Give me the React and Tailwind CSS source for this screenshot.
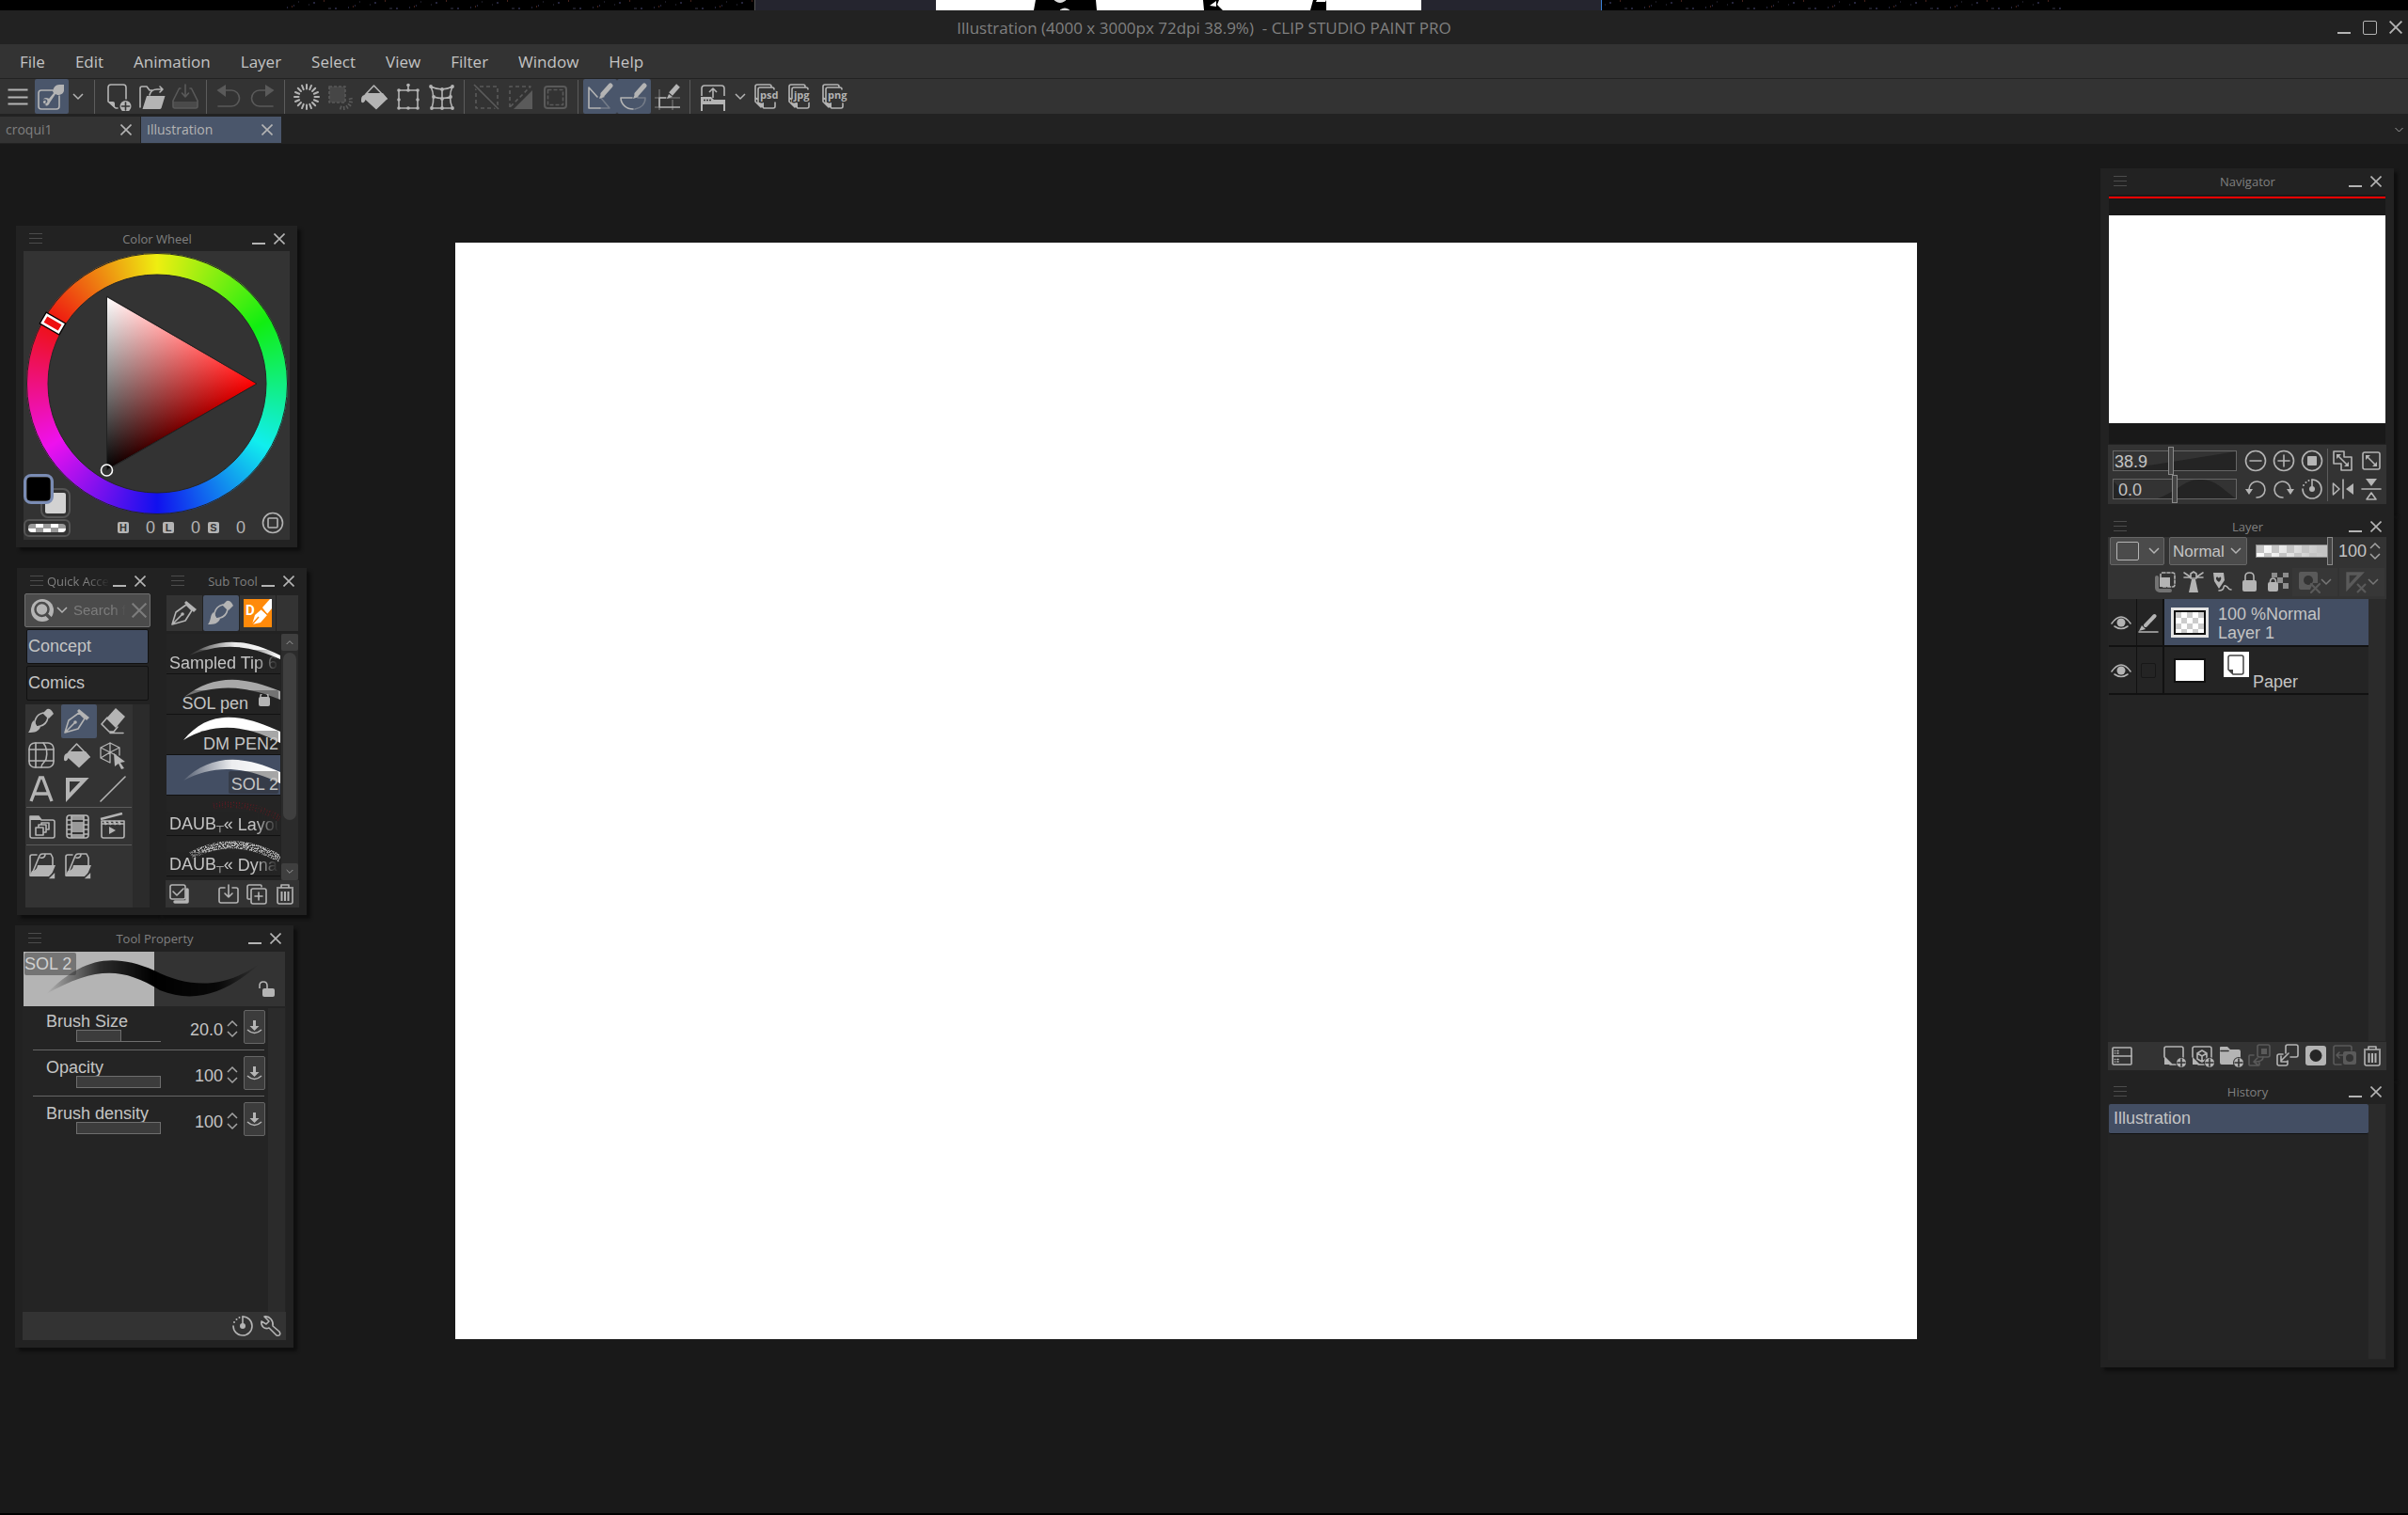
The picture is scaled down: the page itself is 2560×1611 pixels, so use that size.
import { useState } from "react";
import clsx from "clsx";

const MENUS = ["File", "Edit", "Animation", "Layer", "Select", "View", "Filter", "Window", "Help"];

/* ---------- icon helpers ---------- */

function Svg({ size = 30, className, children, ...rest }) {
  return (
    <svg
      width={size}
      height={size}
      viewBox={`0 0 ${size} ${size}`}
      fill="none"
      stroke="currentColor"
      strokeWidth="1.6"
      strokeLinecap="round"
      strokeLinejoin="round"
      className={clsx("shrink-0", className)}
      aria-hidden="true"
      {...rest}
    >
      {children}
    </svg>
  );
}

const solid = { fill: "currentColor", stroke: "none" };

function PlusBadge({ x, y, r = 6 }) {
  return (
    <g>
      <circle cx={x} cy={y} r={r + 1} fill="#333" stroke="none" />
      <circle cx={x} cy={y} r={r} {...solid} />
      <path d={`M${x - 4} ${y}h8M${x} ${y - 4}v8`} stroke="#333" />
    </g>
  );
}

const Chevron = ({ className }) => (
  <svg width="12" height="8" viewBox="0 0 12 8" fill="none" stroke="currentColor" strokeWidth="1.5" className={clsx("shrink-0", className)} aria-hidden="true">
    <path d="M1 1l5 5 5-5" />
  </svg>
);

const CloseGlyph = ({ size = 12 }) => (
  <svg width={size} height={size} viewBox="0 0 12 12" stroke="currentColor" strokeWidth="1.6" aria-hidden="true">
    <path d="M.5.5l11 11M11.5.5l-11 11" />
  </svg>
);

const Bars = () => (
  <svg width="14" height="12" viewBox="0 0 14 12" stroke="currentColor" strokeWidth="1" aria-hidden="true">
    <path d="M0 .5h14M0 5.500h14M0 10.500h14" />
  </svg>
);

/* ---------- command bar icons ---------- */

const MenuIcon = () => (
  <Svg strokeWidth="2.2" strokeLinecap="butt"><path d="M4.500 7.500h21M4.500 15.500h21M4.500 22.500h21" /></Svg>
);

const TouchIcon = () => (
  <Svg>
    <path d="M16 8H4a3 3 0 0 0-3 3v14a3 3 0 0 0 3 3h16a3 3 0 0 0 3-3V14" />
    <path d="M28 2v6c0 3-3 5-7 5l-2-1-6 9c-1 3-3 4-5 3s-3-2-3-4 2-4 4-4 3 1 3 1l5-6-1-2c1-4 3-7 7-7z" {...solid} />
    <path d="M8 23c-2 0-3-1-3-2.500s1-2.500 3-2.500 2 2 1 3" stroke="#4a566b" />
  </Svg>
);

const NewIcon = () => (
  <Svg>
    <path d="M14 27h-2l-8-7V5a3 3 0 0 1 3-3h13a3 3 0 0 1 3 3v12" />
    <path d="M4 20h5a2 2 0 0 1 2 2v5z" {...solid} />
    <PlusBadge x={22.5} y={25} />
  </Svg>
);

const OpenIcon = () => (
  <Svg>
    <path d="M2 26V6a2 2 0 0 1 2-2h5l3 4h3M12 13c1-4 4-6 8-6h5M23 4l3 3-3 3" />
    <path d="M9 14h19.500l-4 13a2 2 0 0 1-2 1H4.500z" {...solid} />
  </Svg>
);

const SaveIcon = () => (
  <Svg>
    <path d="M10 6H8.500L2 19v6a2 2 0 0 0 2 2h22a2 2 0 0 0 2-2v-6L21.500 6H20M15 2v12M11.500 11l3.500 4 3.500-4" />
    <path d="M2 20h26v5a2 2 0 0 1-2 2H4a2 2 0 0 1-2-2z" {...solid} fillOpacity=".6" />
  </Svg>
);

const UndoIcon = ({ flip }) => (
  <Svg className={flip && "-scale-x-100"}>
    <path d="M8 8h10a8.500 8.500 0 0 1 0 17H4" />
    <path d="M2.500 8L12 2v13z" {...solid} />
  </Svg>
);

const RAYS = Array.from({ length: 16 }, (_, i) => i * 22.5);

const RaysIcon = () => (
  <Svg strokeWidth="2">
    {RAYS.map((a) => <path key={a} d="M15 2v4.500" transform={`rotate(${a} 15 15)`} />)}
  </Svg>
);

const DeselectIcon = () => (
  <Svg strokeLinecap="butt">
    <rect x="3" y="4" width="17" height="17" fill="currentColor" fillOpacity=".5" strokeDasharray="3 2" />
    {[75, 100, 125, 150, 175, 200].map((a) => (
      <path key={a} d="M18 9v4" transform={`rotate(${a} 18 19)`} />
    ))}
  </Svg>
);

const BucketIcon = () => (
  <Svg>
    <path d="M6 12l8.500-9L28 17" />
    <path d="M4 13l3-2h17l5 6-12 11.500L5.500 18c-.500 3-4.500 5-4.500 1s1-5 3-6z" {...solid} />
  </Svg>
);

const TransformIcon = () => (
  <Svg>
    <path d="M5 8h20v19H5zM15 8V2" />
    {[[5, 8], [15, 8], [25, 8], [5, 18], [25, 18], [5, 27], [15, 27], [25, 27], [15, 2.5]].map(([x, y]) => (
      <circle key={`${x}-${y}`} cx={x} cy={y} r="1.800" {...solid} />
    ))}
  </Svg>
);

const MeshIcon = () => (
  <Svg>
    <path d="M3 4q12 6 23 0M6 15q9 3 18 0M4 27h22M3 4q5 11 1 23M15 7v20M26 4q-5 11 0 23" />
    {[[3, 4], [26, 4], [15, 7], [6, 15], [15, 17], [24, 15], [4, 27], [15, 27], [26, 27]].map(([x, y]) => (
      <circle key={`${x}-${y}`} cx={x} cy={y} r="1.900" {...solid} />
    ))}
  </Svg>
);

const ClearIcon = () => (
  <Svg strokeLinecap="butt">
    <path d="M4 4v23h23V4z" strokeDasharray="4 3" />
    <path d="M1 1l27 27" stroke="#333" strokeWidth="4" />
    <path d="M2 2l26 26" />
  </Svg>
);

const InvertIcon = () => (
  <Svg strokeLinecap="butt">
    <path d="M4 26V4h22L4 26" strokeDasharray="4 3" />
    <path d="M28 8v20H8z" {...solid} />
  </Svg>
);

const SelectedAreaIcon = () => (
  <Svg strokeLinecap="butt">
    <rect x="4" y="4" width="23" height="23" rx="3" strokeWidth="2" />
    <rect x="7.500" y="7.500" width="16" height="16" strokeDasharray="4 2" />
  </Svg>
);

const PenTip = () => (
  <>
    <path d="M26 3l-8 9" strokeWidth="5" />
    <path d="M14 17l2-5 4 3z" {...solid} />
  </>
);

const SnapRulerIcon = () => (
  <Svg>
    <path d="M15 27H3V5l9 10" />
    <path d="M15 15l10 12H15" strokeOpacity=".4" />
    <PenTip />
  </Svg>
);

const SnapSpecialIcon = () => (
  <Svg>
    <path d="M13 16H1c0 7 6 12 13 12" />
    <path d="M16 28c6-1 11-5 11-12h-8" strokeOpacity=".4" />
    <PenTip />
  </Svg>
);

const SnapGridIcon = () => (
  <Svg strokeLinecap="butt">
    <path d="M6 7v22M1 26h5M20 18v11M1 16h27" strokeOpacity=".4" />
    <path d="M13 16H6v10h22" />
    <PenTip />
  </Svg>
);

const MaterialIcon = () => (
  <Svg strokeLinecap="butt">
    <path d="M3 14V6q0-3 3-3h18q3 0 3 3v8" />
    <path d="M15 16V6M11 10l4-4 4 4" />
    <path d="M2 15h11l3 3h12v12h-2v-7H4v7H2z" {...solid} />
    <path d="M5 18.500h9" stroke="#333" strokeDasharray="2 1" />
  </Svg>
);

function ExportIcon({ label }) {
  return (
    <Svg size={34}>
      <path d="M8 20l-3-2V6a2 2 0 0 1 2-2h13a2 2 0 0 1 2 2M11 28l-6-6V9M25 9a2 2 0 0 0-2-2H10a2 2 0 0 0-2 2v14l6 6h10a2 2 0 0 0 2-2v-4" />
      <path d="M8 23h6v6z" {...solid} />
      <text x="10" y="19" fill="currentColor" stroke="#333" strokeWidth="3" paintOrder="stroke" fontSize="11" fontWeight="700" fontFamily="'Open Sans', sans-serif">{label}</text>
    </Svg>
  );
}

/* ---------- tool icons ---------- */

const BrushIcon = () => (
  <Svg>
    <path d="M8 15c1-4 4-8 9-9l5 5c-1 5-4 8-8 9l-4 1-2-3z" />
    <path d="M17 6l4-4q4-1 7 5l-5 5z" {...solid} />
    <path d="M7 14c-4 3-2 8-6 13 7 0 11-1 13-6l-4-1z" {...solid} />
  </Svg>
);

const PenIcon = () => (
  <Svg>
    <path d="M2 27l4-13 11-8 6 6-7 11zM2 27l10-10" />
    <circle cx="13" cy="16" r="1.800" {...solid} />
    <path d="M17 2l11 9-3 3L15 4z" {...solid} />
  </Svg>
);

const EraserIcon = () => (
  <Svg>
    <path d="M9 11l-6 7 8 8h5l4-5M12 27.500h14" />
    <path d="M18 1l10 9-10 12L8 12z" {...solid} />
  </Svg>
);

const FrameIcon = () => (
  <Svg>
    <rect x="2" y="2" width="26" height="26" rx="6" />
    <path d="M2 9h26M9 2v26M2 21h26M17 2c5 6 4 13 3 17s-5 4-5 9" />
  </Svg>
);

const CubeIcon = () => (
  <Svg>
    <path d="M12 2l10 5v8M12 2L2 7v11l10 5M2 7l10 5 10-5M12 2v21M2 18l10-6 6 3" strokeWidth="1.300" />
    <path d="M16 13l12 9-5 1 4 6-3 1-3-6-4 3z" {...solid} />
  </Svg>
);

const TextIcon = () => (
  <Svg strokeWidth="3.400" strokeLinecap="butt" strokeLinejoin="miter">
    <path d="M4 28l9.500-25h3L26 28M8 20h14" />
  </Svg>
);

const RulerIcon = () => (
  <Svg strokeWidth="4" strokeLinejoin="miter"><path d="M5 5h18L5 24z" /></Svg>
);

const LineIcon = () => <Svg><path d="M2 28L28 2" /></Svg>;

const MaterialsFolderIcon = () => (
  <Svg>
    <path d="M2 25V4h9l3 4h12a2 2 0 0 1 2 2v15a2 2 0 0 1-2 2H4a2 2 0 0 1-2-2z" />
    <path d="M2 4h9l3 4H2z" {...solid} />
    <path d="M8 16h8v8H8zM11 16v-3h8v8h-3M14 13v-2h8v7h-3" />
  </Svg>
);

const FilmIcon = () => (
  <Svg strokeLinecap="butt">
    <rect x="4" y="3" width="23" height="24" rx="3" />
    <path d="M9 3v24M22 3v24" />
    <path d="M9 3h13v5H9zM9 10h13v11H9zM9 23h13v4H9z" {...solid} fillOpacity=".8" />
    <path d="M4 8h5M4 13h5M4 18h5M4 23h5M22 8h5M22 13h5M22 18h5M22 23h5" />
  </Svg>
);

const ClapperIcon = () => (
  <Svg strokeLinecap="butt">
    <path d="M4 12v13a2 2 0 0 0 2 2h20a2 2 0 0 0 2-2V9H4zM4 12h24" />
    <path d="M3 7l23-6M7 9l2 4M12 9l2 4M17 9l2 4M22 9l2 4" strokeWidth="2.500" />
    <path d="M12 15v8l7-4z" {...solid} />
  </Svg>
);

const FileFolderIcon = () => (
  <Svg>
    <path d="M3 25V5a2 2 0 0 1 2-2h5M6 21L13 4q1-2 3-2h9l2 4v8M14 6q4 1 5-3" />
    <path d="M11 14h19l-5 12H4q-2 0-1-2l2-4q5 0 6-6z" {...solid} />
    <path d="M30 20v9h-9z" fill="currentColor" stroke="#333" />
  </Svg>
);

const GRID_TOOLS = [
  [BrushIcon, "Brush"], [PenIcon, "Pen"], [EraserIcon, "Eraser"],
  [FrameIcon, "Frame"], [BucketIcon, "Fill"], [CubeIcon, "Object"],
  [TextIcon, "Text"], [RulerIcon, "Ruler"], [LineIcon, "Line"],
];

/* ---------- small palette icons ---------- */

const TrashIcon = () => (
  <Svg size={24} strokeLinecap="butt">
    <path d="M4 6v14a2 2 0 0 0 2 2h12a2 2 0 0 0 2-2V6M3 5h18M8 5V2h8v3" />
    <path d="M8.500 9v10M12 9v10M15.500 9v10" strokeWidth="2" />
  </Svg>
);

const CheckCopyIcon = () => (
  <Svg size={24}>
    <rect x="3" y="2" width="16" height="15" rx="2" />
    <path d="M6 9l4 4 7-7" />
    <path d="M21 7v13H8" strokeWidth="3.500" />
  </Svg>
);

const ImportIcon = () => (
  <Svg size={24}><path d="M8 5H4a2 2 0 0 0-2 2v12a2 2 0 0 0 2 2h16a2 2 0 0 0 2-2V7a2 2 0 0 0-2-2h-4M12 2v13M8 11l4 4 4-4" /></Svg>
);

const DuplicateIcon = () => (
  <Svg size={24}>
    <path d="M5 17H3a1 1 0 0 1-1-1V4a2 2 0 0 1 2-2h12a1 1 0 0 1 1 1v1" />
    <rect x="6" y="6" width="16" height="16" rx="2" />
    <path d="M14 10v8M10 14h8" />
  </Svg>
);

const DialIcon = () => (
  <Svg size={24}>
    <path d="M12 2a10 10 0 1 1-10 10" />
    <path d="M12 2v10" />
    <circle cx="12" cy="12" r="3" {...solid} />
    <path d="M3 8v.1M5.500 5v.1M8.500 3v.1" strokeWidth="2" />
  </Svg>
);

const WrenchIcon = () => (
  <Svg size={24}>
    <path d="M5 2l5 5-3 3-5-3c-1 5 3 9 8 7l8 8c3 1 5-1 3-4l-7-6c1-5-3-11-9-10z" />
  </Svg>
);

const CircleIcon = ({ children }) => (
  <Svg size={24}><circle cx="12" cy="12" r="10.500" />{children}</Svg>
);

const RotateIcon = ({ flip }) => (
  <Svg size={24} className={flip && "-scale-x-100"}>
    <path d="M5 12a8.500 8.500 0 1 1 8 9" />
    <path d="M1 12h8l-4 6z" {...solid} />
  </Svg>
);

const FitIcon = () => (
  <Svg size={24}>
    <rect x="3" y="3" width="18" height="18" rx="2" />
    <path d="M8 8l8 8" />
    <path d="M6 6h5l-5 5zM18 18v-5l-5 5z" {...solid} />
  </Svg>
);

const FitAllIcon = () => (
  <Svg size={24}>
    <path d="M2 2h11v6h8v14H10v-7H2zM7 7l9 9" />
    <path d="M5 5h5l-5 5zM18 18v-5l-5 5z" {...solid} />
  </Svg>
);

const MirrorIcon = ({ vertical }) => (
  <Svg size={24} className={vertical && "rotate-90"}>
    <path d="M12 2v20" />
    <path d={vertical ? "M9 12L1 6v12z" : "M1.500 6v12l6.500-6z"} {...(vertical ? solid : {})} />
    <path d={vertical ? "M16 12l7-5v10z" : "M15 12l8-6v12z"} {...(vertical ? {} : solid)} />
  </Svg>
);

const ClipMaskIcon = () => (
  <Svg size={24}>
    <path d="M3 7v11a3 3 0 0 0 3 3h11" strokeWidth="4" strokeOpacity=".5" />
    <rect x="7" y="2" width="15" height="15" rx="2" strokeDasharray="3 2" />
    <rect x="6" y="7" width="11" height="10" {...solid} />
  </Svg>
);

const LighthouseIcon = () => (
  <Svg size={24}>
    <path d="M9 3l3-2 3 2v5H9zM8 6L2 2M8 7H2M16 6l6-4M16 7h6" />
    <path d="M10 9h4l3 14H7z" {...solid} />
  </Svg>
);

const DraftIcon = () => (
  <Svg size={24}>
    <path d="M3 2h11l1 8-6 9-5-8z" {...solid} />
    <path d="M9 8c-3-4-5 1 0 4 4-3 2-8 0-4z" fill="#333" stroke="none" />
    <path d="M9 21c8 0 3-6 7-5s2 4 6 4" />
  </Svg>
);

const LockIcon = () => (
  <Svg size={24}>
    <rect x="4" y="10" width="15" height="12" rx="2" {...solid} />
    <path d="M7 10V6q0-4 4.500-4T16 6v4" />
  </Svg>
);

const LockAlphaIcon = () => (
  <Svg size={24}>
    <path d="M5 2h6v5H5zM17 2h6v5h-6zM11 7h6v6h-6zM17 13h6v6h-6z" {...solid} fillOpacity=".7" />
    <rect x="1" y="12" width="11" height="10" rx="2" {...solid} />
    <path d="M3.500 12q0-4 3-4t3 4" />
  </Svg>
);

const MaskToggleIcon = () => (
  <Svg size={24}>
    <path d="M3 1h16a2 2 0 0 1 2 2v10h-5l-3 7H3a2 2 0 0 1-2-2V3a2 2 0 0 1 2-2z" {...solid} />
    <circle cx="11" cy="10" r="5" fill="#333" stroke="none" />
    <path d="M14 14l9 9M23 14l-9 9" strokeWidth="2.200" />
  </Svg>
);

const RulerToggleIcon = () => (
  <Svg size={24} strokeLinecap="butt">
    <path d="M3 3h14L3 18z" strokeWidth="3.400" strokeLinejoin="miter" />
    <path d="M13 14l9 9M22 14l-9 9" strokeWidth="2.200" />
  </Svg>
);

const EyeIcon = () => (
  <Svg size={24}>
    <path d="M2 13q10-14 20 0M5 16q7 5 14 0" />
    <circle cx="12" cy="12" r="4.500" {...solid} />
  </Svg>
);

const EditPenIcon = () => (
  <Svg size={24}>
    <path d="M2 22h20" />
    <path d="M18.500 5L9 15" strokeWidth="4" />
    <path d="M2 21l3-6 4 4z" {...solid} />
  </Svg>
);

const TwoPaneIcon = () => (
  <Svg size={24}>
    <rect x="2" y="3" width="20" height="18" rx="1" />
    <path d="M2 12h20M7 6.500h1M7 9h1M7 15.500h1M7 18h1M4.500 6.500h.1M4.500 9h.1M4.500 15.500h.1M4.500 18h.1" />
  </Svg>
);

const NewLayerIcon = () => (
  <Svg size={26}>
    <path d="M2 14V5a2 2 0 0 1 2-2h16a2 2 0 0 1 2 2v10M8 22h7M2 14l8 8" />
    <path d="M2 14l8 8H2z" {...solid} />
    <PlusBadge x={20} y={20} r={5} />
  </Svg>
);

const New3dIcon = () => (
  <Svg size={26}>
    <path d="M2 14V5a2 2 0 0 1 2-2h16a2 2 0 0 1 2 2v10M8 22h7M12 7l5 3v6l-5 3-5-3v-6zM7 10l5 3 5-3M12 13v6" />
    <path d="M2 14l8 8H2z" {...solid} />
    <PlusBadge x={20} y={20} r={5} />
  </Svg>
);

const NewFolderIcon = () => (
  <Svg size={26}>
    <path d="M1 4a1 1 0 0 1 1-1h7l3 3h9a2 2 0 0 1 2 2v14H3a2 2 0 0 1-2-2z" {...solid} />
    <path d="M2 7.500h8" stroke="#333" />
    <PlusBadge x={21} y={20} r={5} />
  </Svg>
);

const TransferIcon = () => (
  <Svg size={26}>
    <rect x="11" y="1" width="13" height="13" rx="2" />
    <rect x="15" y="5" width="6" height="6" {...solid} />
    <path d="M7 12H3a1 1 0 0 0-1 1v9a1 1 0 0 0 1 1h9a1 1 0 0 0 1-1v-2M17 14c0 4-4 5-9 5M11 15l-4 4 4 3" />
  </Svg>
);

const MergeIcon = () => (
  <Svg size={26}>
    <path d="M11 10V3a2 2 0 0 1 2-2h9a2 2 0 0 1 2 2v9a2 2 0 0 1-2 2h-6M8 11H4a2 2 0 0 0-2 2v8a2 2 0 0 0 2 2h7a2 2 0 0 0 2-2v-3M14 10l-8 8M6 13v6h6" />
  </Svg>
);

const MaskIcon = () => (
  <Svg size={26}>
    <rect x="2" y="2" width="22" height="21" rx="3" {...solid} />
    <circle cx="13" cy="12.500" r="6.500" fill="#262626" stroke="none" />
  </Svg>
);

const ApplyMaskIcon = () => (
  <Svg size={26}>
    <path d="M21 7V4a2 2 0 0 0-2-2H4a2 2 0 0 0-2 2v16a2 2 0 0 0 2 2h6M12 12H5M8 9l-3 3 3 3" />
    <rect x="12" y="8" width="14" height="14" rx="2" {...solid} />
    <circle cx="19" cy="15" r="4" fill="#333" stroke="none" />
  </Svg>
);

/* ---------- shared pieces ---------- */

function PanelHeader({ title, clipped }) {
  return (
    <header
      className={clsx(
        "h-[27px] shrink-0 items-center pt-px pr-[13px] pl-[14px] text-[13px] leading-4 text-[#808080]",
        clipped ? "flex" : "grid grid-cols-[1fr_auto_1fr]"
      )}
    >
      <button aria-label={`${title} menu`} className="w-[14px] shrink-0 text-[#4c4c4c]"><Bars /></button>
      {clipped ? (
        <h2 className="ml-1 w-[70px] overflow-hidden whitespace-nowrap [mask-image:linear-gradient(to_right,#000_60%,transparent_95%)]">{title}</h2>
      ) : (
        <h2 className="whitespace-nowrap">{title}</h2>
      )}
      <div className="flex shrink-0 items-center justify-end gap-[9px] text-[#b4b4b4]">
        <button aria-label={`Minimize ${title}`} className="h-3 w-[14px] border-b-2 border-current" />
        <button aria-label={`Close ${title}`}><CloseGlyph /></button>
      </div>
    </header>
  );
}

function Panel({ title, clipped, className, children }) {
  return (
    <section className={clsx("flex flex-col bg-[#222] shadow-[4px_4px_3px_#0e0e0e]", className)} aria-label={title}>
      <PanelHeader title={title} clipped={clipped} />
      {children}
    </section>
  );
}

function ToolButton({ label, active, dim, className, children }) {
  return (
    <button
      aria-label={label}
      className={clsx(
        "flex shrink-0 items-center justify-center",
        active && "rounded-xs bg-[#4a566b]",
        dim ? "text-[#5a5a5a]" : "text-[#b4b4b4]",
        className
      )}
    >
      {children}
    </button>
  );
}

const Divider = () => <span className="mx-[5px] h-9 w-px shrink-0 bg-[#5c5c5c]" />;

function Spinner({ label }) {
  return (
    <div className="flex flex-col gap-1 text-[#a4a4a4]">
      <button aria-label={`Increase ${label}`}><Chevron className="rotate-180" /></button>
      <button aria-label={`Decrease ${label}`}><Chevron /></button>
    </div>
  );
}

/* ---------- window frame ---------- */

function DesktopStrip() {
  return (
    <div className="flex h-[11px] w-full overflow-hidden bg-black" aria-hidden="true">
      <svg className="h-[11px] flex-[802]">
        <defs>
          <pattern id="stars" width="65" height="11" patternUnits="userSpaceOnUse">
            <path d="M8 3h2M31 9h2M45 8h1M52 6h1" stroke="#4a4a78" />
            <path d="M24 9h3M57 2h1M3 5h1" stroke="#35354a" />
            <path d="M50 7h1M19 1h1" stroke="#8a4436" />
          </pattern>
        </defs>
        <rect x="295" width="507" height="11" fill="url(#stars)" />
      </svg>
      <svg width="901" height="11" className="shrink-0 bg-[#25252f]">
        <rect x="193" width="516" height="11" fill="#fff" />
        <path d="M299 0h64l1 11h-67zM477 0h17l-2 5 6 6h-20zM594 0h14v11h-17z" fill="#000" />
        <path d="M319 0q6 5 12 0M325 11q5-4 10 0" fill="#ddd" stroke="#ddd" />
        <path d="M484 6l7-5v6zM597 2h10l1-2h-10z" fill="#fff" />
        <path d="M.5 0v11" stroke="#555" />
        <path d="M900.500 0v11" stroke="#3b82d6" />
      </svg>
      <svg className="h-[11px] flex-[857]"><rect width="500" height="11" fill="url(#stars)" /></svg>
    </div>
  );
}

function TitleBar() {
  return (
    <div className="grid h-9 grid-cols-[1fr_auto_1fr] items-center bg-[#222] px-1.5 text-[17px] text-[#808080]">
      <h1 className="col-start-2 pt-px whitespace-pre">Illustration (4000 x 3000px 72dpi 38.9%)  - CLIP STUDIO PAINT PRO</h1>
      <div className="flex items-center justify-end gap-[13px] text-[#b4b4b4]">
        <button aria-label="Minimize" className="h-[14px] w-[14px] border-b-2 border-current" />
        <button aria-label="Maximize" className="h-[15px] w-[15px] rounded-xs border border-current" />
        <button aria-label="Close"><CloseGlyph size={14} /></button>
      </div>
    </div>
  );
}

function CommandBar() {
  return (
    <div className="flex h-[37px] items-center bg-[#333]" role="toolbar">
      <ToolButton label="Main menu" className="h-full w-[37px]"><MenuIcon /></ToolButton>
      <ToolButton label="Touch gesture" active className="h-full w-9"><TouchIcon /></ToolButton>
      <ToolButton label="Touch options" className="h-full w-5"><Chevron /></ToolButton>
      <span className="mx-[7px] h-9 w-px bg-[#5c5c5c]" />
      <ToolButton label="New" className="h-full w-9"><NewIcon /></ToolButton>
      <ToolButton label="Open" className="h-full w-[35px]"><OpenIcon /></ToolButton>
      <ToolButton label="Save" dim className="h-full w-[35px]"><SaveIcon /></ToolButton>
      <Divider />
      <ToolButton label="Undo" dim className="h-full w-9"><UndoIcon /></ToolButton>
      <ToolButton label="Redo" dim className="h-full w-9"><UndoIcon flip /></ToolButton>
      <Divider />
      <ToolButton label="Clear" className="h-full w-9"><RaysIcon /></ToolButton>
      <ToolButton label="Clear outside selection" dim className="h-full w-9"><DeselectIcon /></ToolButton>
      <ToolButton label="Fill" className="h-full w-9"><BucketIcon /></ToolButton>
      <ToolButton label="Scale and rotate" className="h-full w-9"><TransformIcon /></ToolButton>
      <ToolButton label="Mesh transformation" className="h-full w-9"><MeshIcon /></ToolButton>
      <Divider />
      <ToolButton label="Deselect" dim className="h-full w-9"><ClearIcon /></ToolButton>
      <ToolButton label="Invert selected area" dim className="h-full w-9"><InvertIcon /></ToolButton>
      <ToolButton label="Show selection border" dim className="h-full w-[38px]"><SelectedAreaIcon /></ToolButton>
      <Divider />
      <ToolButton label="Snap to ruler" active className="h-full w-9"><SnapRulerIcon /></ToolButton>
      <ToolButton label="Snap to special ruler" active className="h-full w-9"><SnapSpecialIcon /></ToolButton>
      <ToolButton label="Snap to grid" className="h-full w-9"><SnapGridIcon /></ToolButton>
      <Divider />
      <ToolButton label="Material" className="h-full w-[38px]"><MaterialIcon /></ToolButton>
      <ToolButton label="Material options" className="h-full w-5"><Chevron /></ToolButton>
      <ToolButton label="Export psd" className="h-full w-9"><ExportIcon label="psd" /></ToolButton>
      <ToolButton label="Export jpg" className="h-full w-9"><ExportIcon label="jpg" /></ToolButton>
      <ToolButton label="Export png" className="h-full w-9"><ExportIcon label="png" /></ToolButton>
    </div>
  );
}

function DocumentTabs() {
  const tabs = ["croqui1", "Illustration"];
  const [current, setCurrent] = useState("Illustration");
  return (
    <div className="flex h-[31px] items-center gap-px bg-[#222] pr-[5px] text-[14px]">
      {tabs.map((tab) => (
        <div
          key={tab}
          className={clsx(
            "flex h-7 w-[149px] items-center justify-between pr-[9px] pl-1.5",
            tab === current ? "bg-[#4a566b] text-[#b4b4b4]" : "bg-[#333] text-[#808080]"
          )}
        >
          <button onClick={() => setCurrent(tab)}>{tab}</button>
          <button aria-label={`Close ${tab}`} className="text-[#b4b4b4]"><CloseGlyph /></button>
        </div>
      ))}
      <button aria-label="All tabs" className="ml-auto text-[#9a9a9a]"><svg width="9" height="6" viewBox="0 0 9 6" fill="none" stroke="currentColor"><path d="M.5 1l4 4 4-4" /></svg></button>
    </div>
  );
}

/* ---------- color wheel ---------- */

function ColorWheel() {
  return (
    <Panel title="Color Wheel" className="ml-px w-[299px] pb-2">
      <div className="relative mx-2 h-[307px] bg-[#333] pt-0.5">
        <div className="mx-auto grid h-[278px] w-[278px]">
          <div className="rounded-full bg-[conic-gradient(#eeee11,#11ee11,#11eeee,#1111ee,#ee11ee,#ee1111,#eeee11)] [grid-area:1/1]" />
          <svg width="278" height="278" viewBox="0 0 278 278" className="[grid-area:1/1]">
            <defs>
              <linearGradient id="tri-red" gradientUnits="userSpaceOnUse" x1="85.500" y1="230" x2="165" y2="93">
                <stop offset="0" stopColor="#000" />
                <stop offset="1" stopColor="#f00" />
              </linearGradient>
              <linearGradient id="tri-white" gradientUnits="userSpaceOnUse" x1="165" y1="185" x2="85.500" y2="47">
                <stop offset="0" stopColor="#000" />
                <stop offset="1" stopColor="#0ff" />
              </linearGradient>
            </defs>
            <circle cx="139" cy="139" r="138.500" fill="none" stroke="#262626" />
            <circle cx="139" cy="139" r="116" fill="#333" stroke="#262626" />
            <g className="isolate">
              <path d="M85.500 47L245 139 85.500 230z" fill="url(#tri-red)" />
              <path d="M85.500 47L245 139 85.500 230z" fill="url(#tri-white)" className="mix-blend-screen" />
            </g>
            <path d="M85.500 46L245 139 85.500 231z" fill="none" stroke="#222" />
            <g transform="rotate(30 28 75)">
              <rect x="15.500" y="67.500" width="25" height="15" fill="#000" />
              <rect x="18" y="70" width="20" height="10" fill="#ee1111" stroke="#fff" strokeWidth="2.500" />
            </g>
            <circle cx="85.500" cy="231" r="6" fill="none" stroke="#fff" strokeWidth="1.600" />
          </svg>
        </div>
        <div className="flex h-7 items-center pl-[100px]">
          {["H", "L", "S"].map((k) => (
            <label key={k} className="flex w-12 items-center text-[18px] leading-5 text-[#b4b4b4]">
              <span className="flex h-3 w-3 items-center justify-center rounded-xs bg-[#b4b4b4] text-[11px] font-bold text-[#333]">{k}</span>
              <input defaultValue="0" className="w-7 bg-transparent text-right" />
            </label>
          ))}
        </div>
        <button aria-label="Sub color" className="absolute bottom-[23px] left-[18px] h-8 w-8 rounded-lg border-2 border-[#555] bg-[#333] p-[3px]">
          <span className="block h-full rounded-xs bg-[#d2d2d2]" />
        </button>
        <button aria-label="Main color" className="absolute bottom-[38px] left-0 h-8 w-8 rounded-lg border-[3px] border-[#7a8cb4] bg-[#333] p-px">
          <span className="block h-full rounded-xs bg-black" />
        </button>
        <button aria-label="Transparent color" className="absolute bottom-[3px] left-0 h-[19px] w-[50px] rounded-md border-2 border-[#555] px-[3px]">
          <span className="block h-[9px] rounded-sm bg-[repeating-conic-gradient(#fff_0_25%,#999_0_50%)] bg-[length:16px_9px]" />
        </button>
        <button aria-label="Color space" className="absolute right-[6px] bottom-[6px] text-[#b4b4b4]">
          <Svg size={24}><circle cx="12" cy="12" r="10.500" /><rect x="7" y="7" width="10" height="10" rx="1" /></Svg>
        </button>
      </div>
    </Panel>
  );
}

/* ---------- quick access ---------- */

function QuickAccess() {
  return (
    <Panel title="Quick Access" clipped className="ml-0.5 w-[150px]">
      <div className="flex h-9 w-[134px] shrink-0 items-center self-center overflow-hidden rounded-xs border border-[#707070] bg-[#4b4b4b] px-1.5 text-[#b4b4b4]">
        <svg width="24" height="24" viewBox="0 0 24 24" className="shrink-0" aria-hidden="true">
          <circle cx="12" cy="12" r="12" fill="#b4b4b4" />
          <circle cx="11.500" cy="11" r="7" fill="none" stroke="#4b4b4b" strokeWidth="2.500" />
          <path d="M16 16l6 6" stroke="#4b4b4b" strokeWidth="3.500" />
        </svg>
        <Chevron className="ml-[3px]" />
        <input
          aria-label="Search quick access"
          placeholder="Search from"
          className="ml-1.5 w-[56px] bg-transparent text-[15px] placeholder:text-[#7c7c7c] [mask-image:linear-gradient(to_right,#000_75%,transparent)]"
        />
        <button aria-label="Clear search" className="ml-1.5 shrink-0 text-[#7c7c7c]"><CloseGlyph size={16} /></button>
      </div>
      <div className="mx-auto mt-0.5 flex w-[130px] flex-col gap-0.5 text-[18px] text-[#c4c4c4]">
        <button className="h-[37px] rounded-xs border border-[#111] bg-[#434e63] pl-px text-left">Concept</button>
        <button className="h-[37px] rounded-xs border border-[#111] bg-[#242424] pl-px text-left">Comics</button>
      </div>
      <div className="mx-auto mt-1 mb-2 flex w-[132px] flex-1 bg-[#2b2b2b]">
        <div className="w-[114px] bg-[#333]">
          <div className="grid grid-cols-3">
            {GRID_TOOLS.map(([Glyph, name]) => (
              <ToolButton key={name} label={name} active={name === "Pen"} className="h-9 w-full pr-1"><Glyph /></ToolButton>
            ))}
          </div>
          <div className="mx-px mt-px grid grid-cols-3 border-y border-[#5c5c5c]">
            <ToolButton label="Materials" className="h-[39px] pr-1"><MaterialsFolderIcon /></ToolButton>
            <ToolButton label="Timeline" className="h-[39px] pr-1"><FilmIcon /></ToolButton>
            <ToolButton label="Animation" className="h-[39px] pr-1"><ClapperIcon /></ToolButton>
          </div>
          <div className="mt-1 grid grid-cols-3">
            <ToolButton label="Open folder" className="h-9 pr-1"><FileFolderIcon /></ToolButton>
            <ToolButton label="Open file" className="h-9 pr-1"><FileFolderIcon /></ToolButton>
          </div>
        </div>
      </div>
    </Panel>
  );
}

/* ---------- sub tool ---------- */

const SUB_TOOLS = [
  { name: "Sampled Tip 6", kind: "taper", long: true },
  { name: "SOL pen", kind: "gray", locked: true },
  { name: "DM PEN2", kind: "bold" },
  { name: "SOL 2", kind: "soft" },
  { name: "Layou", kind: "red", long: true, daub: true },
  { name: "Dynam", kind: "noise", long: true, daub: true },
];

function StrokePreview({ kind }) {
  return (
    <svg width="121" height="42" viewBox="0 0 121 42" className="[grid-area:1/1]" aria-hidden="true">
      {kind === "taper" && <path d="M24 23C50 6 80 2 121 23v4C84 10 56 10 24 23z" fill="url(#fade)" />}
      {kind === "gray" && <path d="M19 24C48 2 78 0 121 18v9C80 10 50 12 19 24z" fill="#a8a8a8" filter="url(#soft)" />}
      {kind === "bold" && <path d="M18 27C42 -2 72 -5 121 18v12C84 10 50 8 18 27z" fill="#fff" />}
      {kind === "soft" && <path d="M18 27C44 2 76 -3 121 18v12C82 11 50 10 18 27z" fill="url(#fade)" filter="url(#soft)" />}
      {kind === "red" && <path d="M50 11Q85 5 120 24" stroke="#5c1a20" strokeWidth="7" strokeDasharray="1 2" fill="none" filter="url(#grain)" />}
      {kind === "noise" && <path d="M26 21Q70 -4 121 24" stroke="#b4b4b4" strokeWidth="8" fill="none" filter="url(#grain)" />}
    </svg>
  );
}

function SubTool() {
  const [selected, setSelected] = useState("SOL 2");
  return (
    <Panel title="Sub Tool" className="w-[158px] pb-2">
      <svg width="0" height="0" className="absolute" aria-hidden="true">
        <defs>
          <linearGradient id="fade" x1="0" x2="1">
            <stop offset="0" stopColor="#fff" stopOpacity=".1" />
            <stop offset=".5" stopColor="#fff" stopOpacity=".9" />
            <stop offset="1" stopColor="#fff" />
          </linearGradient>
          <filter id="soft"><feGaussianBlur stdDeviation=".7" /></filter>
          <filter id="grain" x="-.1" y="-.5" width="1.200" height="2">
            <feTurbulence type="fractalNoise" baseFrequency=".7" numOctaves="2" result="n" />
            <feColorMatrix in="n" values="0 0 0 0 1  0 0 0 0 1  0 0 0 0 1  6 0 0 0 -2.400" result="m" />
            <feComposite in="SourceGraphic" in2="m" operator="in" />
          </filter>
        </defs>
      </svg>
      <div className="mx-[9px] mt-0.5 flex h-[38px] gap-px">
        <ToolButton label="Pen group" className="w-[38px] bg-[#333]"><PenIcon /></ToolButton>
        <ToolButton label="Brush group" active className="w-[38px]"><BrushIcon /></ToolButton>
        <ToolButton label="Daub group" className="w-[38px] bg-[#333]">
          <svg width="30" height="30" viewBox="0 0 30 30" className="bg-[#ff8a0a]" aria-hidden="true">
            <text x="2" y="17" fontSize="15" fontWeight="700" fill="#fff" fontFamily="Roboto, sans-serif">D</text>
            <path d="M9 27l3-10 7-6 6 6-7 8z" fill="#fff" />
            <path d="M20 9l8-9h2v10l-5 6z" fill="#fff" />
            <path d="M17 9l10 9M9 27l7-8" stroke="#ff8a0a" strokeWidth="1.500" />
          </svg>
        </ToolButton>
        <span className="flex-1 bg-[#333]" />
      </div>
      <div className="mx-[9px] mt-[3px] flex h-[262px] justify-between">
        <ul className="w-[121px]">
          {SUB_TOOLS.map((tool) => (
            <li key={tool.kind}>
              <button
                onClick={() => setSelected(tool.name)}
                className={clsx(
                  "grid h-[43px] w-full overflow-hidden border-b border-[#111] text-left",
                  tool.name === selected ? "bg-[#434e63]" : "bg-[#242424]"
                )}
              >
                <StrokePreview kind={tool.kind} />
                <span
                  className={clsx(
                    "mr-0.5 mb-px flex h-6 items-center self-end rounded-xs bg-[#242424]/40 pt-[3px] pl-[3px] text-[18px] leading-5 whitespace-nowrap text-[#c4c4c4] [grid-area:1/1]",
                    tool.long ? "w-[119px] overflow-hidden [mask-image:linear-gradient(to_right,#000_80%,transparent)]" : "justify-self-end"
                  )}
                >
                  {tool.daub && <span className="whitespace-pre">DAUB<span className="text-[11px]">┬</span>« </span>}
                  {tool.name}
                  {tool.locked && (
                    <svg width="32" height="20" viewBox="0 0 32 20" aria-hidden="true">
                      <rect x="11" y="3" width="12" height="10" rx="2" fill="#b4b4b4" />
                      <path d="M13 4V2q0-3 4-3t4 3v2" fill="none" stroke="#b4b4b4" strokeWidth="1.500" />
                    </svg>
                  )}
                </span>
              </button>
            </li>
          ))}
        </ul>
        <div className="flex w-[18px] flex-col bg-[#2b2b2b] text-[#9a9a9a]">
          <button aria-label="Scroll up" className="flex h-[18px] items-center justify-center rounded-xs bg-[#3f3f3f]"><Chevron className="w-2 rotate-180" /></button>
          <span className="mx-0.5 mt-0.5 h-[178px] rounded-lg bg-[#3f3f3f]" />
          <button aria-label="Scroll down" className="mt-auto flex h-[18px] items-center justify-center rounded-xs bg-[#3f3f3f]"><Chevron className="w-2" /></button>
        </div>
      </div>
      <div className="mx-2 flex flex-1 items-center bg-[#333] text-[#b4b4b4]">
        <ToolButton label="Show selected" className="ml-0.5 w-6"><CheckCopyIcon /></ToolButton>
        <ToolButton label="Import sub tool" className="ml-auto w-[30px]"><ImportIcon /></ToolButton>
        <ToolButton label="Duplicate sub tool" className="w-[30px]"><DuplicateIcon /></ToolButton>
        <ToolButton label="Delete sub tool" className="w-[30px]"><TrashIcon /></ToolButton>
      </div>
    </Panel>
  );
}

/* ---------- tool property ---------- */

function PropertyRow({ label, initial, fill }) {
  const [value, setValue] = useState(fill);
  return (
    <div className="ml-[11px] flex h-[49px] items-start border-b border-[#666] pt-1.5 first:h-[47px] first:pt-1 last:border-0">
      <div className="ml-[14px] w-[122px]">
        <label className="block text-[18px] leading-[25px] whitespace-nowrap text-[#c4c4c4]">
          {label}
          <div className="-mt-1 ml-8 grid h-[13px] w-[90px] border-b border-[#6e6e6e]">
            <span className="border border-b-0 border-[#6e6e6e] bg-[#3c3c3c] [grid-area:1/1]" style={{ width: `${value}%` }} />
            <input
              type="range"
              value={value}
              onChange={(e) => setValue(e.target.value)}
              className="h-3 w-full cursor-pointer appearance-none opacity-0 [grid-area:1/1]"
            />
          </div>
        </label>
      </div>
      <input aria-label={`${label} value`} defaultValue={initial} className="mt-[9px] w-[66px] bg-transparent text-right text-[18px] leading-6 text-[#c4c4c4]" />
      <div className="mt-[10px] ml-1"><Spinner label={label} /></div>
      <button aria-label={`${label} dynamics`} className="ml-1.5 flex h-9 w-[23px] shrink-0 items-center justify-center rounded-xs border border-[#666] bg-[#3c3c3c] text-[#b4b4b4]">
        <svg width="17" height="18" viewBox="0 0 17 18" fill="none" stroke="currentColor" strokeWidth="1.500" aria-hidden="true">
          <path d="M1 12q7.500 7 15 0" />
          <path d="M7 2h3v6h3.500l-5 5-5-5H7z" {...solid} />
        </svg>
      </button>
    </div>
  );
}

function ToolProperty() {
  return (
    <Panel title="Tool Property" className="mt-[11px] h-[449px] w-[296px] pb-2">
      <div className="mx-[9px] mt-px grid h-[58px] shrink-0 bg-[#333]">
        <svg width="278" height="58" viewBox="0 0 278 58" className="[grid-area:1/1]" aria-hidden="true">
          <defs>
            <linearGradient id="ink" x1="0" x2="1">
              <stop offset="0" stopColor="#000" stopOpacity="0" />
              <stop offset=".25" stopColor="#000" stopOpacity=".75" />
              <stop offset=".5" stopColor="#000" />
              <stop offset=".8" stopColor="#000" stopOpacity=".85" />
              <stop offset="1" stopColor="#000" stopOpacity="0" />
            </linearGradient>
          </defs>
          <rect width="139" height="58" fill="#b4b4b4" />
          <path d="M24 45C60 10 90 -1 139 20c40 20 75 18 112-7C216 44 182 56 145 41 105 16 76 16 24 45z" fill="url(#ink)" filter="url(#soft)" />
          <rect x="254" y="39" width="13" height="9" rx="2" fill="#b4b4b4" />
          <path d="M251 39v-3q0-4 4-4t4 4v4" fill="none" stroke="#b4b4b4" strokeWidth="1.600" />
        </svg>
        <span className="mt-px ml-px h-6 w-[55px] rounded-xs bg-[#333]/50 text-[18px] leading-6 text-[#d0d0d0] [grid-area:1/1]">SOL 2</span>
      </div>
      <div className="mx-2 flex flex-1 bg-[#242424]">
        <div className="w-[257px]">
          <PropertyRow label="Brush Size" initial="20.0" fill={53} />
          <PropertyRow label="Opacity" initial="100" fill={100} />
          <PropertyRow label="Brush density" initial="100" fill={100} />
        </div>
        <span className="mt-0.5 mr-px ml-auto w-[18px] bg-[#2b2b2b]" />
      </div>
      <div className="mx-2 flex h-[30px] items-center justify-end gap-1.5 bg-[#333] pr-1 text-[#b4b4b4]">
        <button aria-label="Initialize"><DialIcon /></button>
        <button aria-label="Settings"><WrenchIcon /></button>
      </div>
    </Panel>
  );
}

/* ---------- navigator ---------- */

function NavSlider({ label, text, initial, shape, pad }) {
  const [value, setValue] = useState(initial);
  return (
    <div className="grid h-[30px] w-[132px] items-center">
      <svg width="132" height="22" viewBox="0 0 132 22" className="[grid-area:1/1]" aria-hidden="true">
        <path d={shape} fill="#242424" />
        <rect x=".5" y=".5" width="131" height="21" fill="none" stroke="#666" />
      </svg>
      <span className={clsx("mt-0.5 text-[18px] leading-5 text-[#c4c4c4] [grid-area:1/1]", pad)}>{text}</span>
      <input
        type="range"
        aria-label={label}
        step="any"
        value={value}
        onChange={(e) => setValue(e.target.value)}
        className="h-[30px] w-full appearance-none bg-transparent [grid-area:1/1] [&::-webkit-slider-thumb]:h-[30px] [&::-webkit-slider-thumb]:w-1.5 [&::-webkit-slider-thumb]:appearance-none [&::-webkit-slider-thumb]:border [&::-webkit-slider-thumb]:border-[#8a8a8a] [&::-webkit-slider-thumb]:bg-[#444]"
      />
    </div>
  );
}

function Navigator() {
  return (
    <Panel title="Navigator" className="pb-[10px]">
      <div className="mx-[9px] my-px bg-[#191919] pt-0.5 pb-[22px]">
        <div className="h-0.5 bg-[#f00]" />
        <div className="mt-[18px] h-[221px] bg-white" />
      </div>
      <div className="mx-2 flex items-center bg-[#333] pt-0.5 pb-px pl-[5px] text-[#b4b4b4]">
        <div>
          <NavSlider label="Zoom" text="38.9" initial={46.8} shape="M0 22L132 1v21z" pad="pl-0.5" />
          <NavSlider label="Rotate" text="0.0" initial={50} shape="M0 2l20 20H0zM45 22C70 14 75 1 92 1s20 6 40 21z" pad="pl-1.5" />
        </div>
        <div className="ml-[5px] grid grid-cols-3">
          <ToolButton label="Zoom out" className="h-[30px] w-[30px]"><CircleIcon><path d="M6 12h12" /></CircleIcon></ToolButton>
          <ToolButton label="Zoom in" className="h-[30px] w-[30px]"><CircleIcon><path d="M6 12h12M12 6v12" /></CircleIcon></ToolButton>
          <ToolButton label="Actual size" className="h-[30px] w-[30px]"><CircleIcon><rect x="7" y="7" width="10" height="10" rx="1" {...solid} /></CircleIcon></ToolButton>
          <ToolButton label="Rotate left" className="h-[30px] w-[30px]"><RotateIcon /></ToolButton>
          <ToolButton label="Rotate right" className="h-[30px] w-[30px]"><RotateIcon flip /></ToolButton>
          <ToolButton label="Reset rotation" className="h-[30px] w-[30px]"><DialIcon /></ToolButton>
        </div>
        <span className="mx-px h-14 w-px bg-[#5c5c5c]" />
        <div className="grid grid-cols-2">
          <ToolButton label="Fit to navigator" className="h-[30px] w-[30px]"><FitAllIcon /></ToolButton>
          <ToolButton label="Fit to screen" className="h-[30px] w-[30px]"><FitIcon /></ToolButton>
          <ToolButton label="Flip horizontal" className="h-[30px] w-[30px]"><MirrorIcon /></ToolButton>
          <ToolButton label="Flip vertical" className="h-[30px] w-[30px]"><MirrorIcon vertical /></ToolButton>
        </div>
      </div>
    </Panel>
  );
}

/* ---------- layers ---------- */

function LayerRow({ name, active, children }) {
  return (
    <li className="flex h-[51px] border-b-2 border-[#111]">
      <ToolButton label={`Toggle ${name}`} className="w-[30px] border-r border-[#111] pr-1"><EyeIcon /></ToolButton>
      <ToolButton label={`Edit ${name}`} className="w-[29px] border-r-2 border-[#111] pr-1">
        {active ? <EditPenIcon /> : <span className="h-4 w-4 rounded-xs border border-[#171717]" />}
      </ToolButton>
      <div className={clsx("flex flex-1 items-center text-[18px] leading-5 text-[#c4c4c4]", active && "bg-[#434e63]")}>
        {children}
      </div>
    </li>
  );
}

function LayerPanel() {
  return (
    <Panel title="Layer" className="h-[601px] pb-[9px]">
      <div className="mx-2 -mt-0.5 bg-[#333]">
        <div className="flex h-[30px] items-center pl-0.5">
          <button aria-label="Palette color" className="flex h-[30px] w-[58px] items-center justify-between rounded-xs border border-[#666] bg-[#4b4b4b] pr-1 pl-1.5 text-[#b4b4b4]">
            <span className="h-5 w-6 rounded-xs border border-current" />
            <Chevron />
          </button>
          <div className="ml-[5px] grid h-[30px] w-[83px] items-center rounded-xs border border-[#666] bg-[#4b4b4b] text-[#b4b4b4]">
            <select aria-label="Blending mode" className="h-full w-full appearance-none pt-0.5 pl-[3px] text-[17px] text-[#c4c4c4] [grid-area:1/1]">
              <option>Normal</option>
              <option>Multiply</option>
              <option>Screen</option>
            </select>
            <Chevron className="pointer-events-none mr-[5px] justify-self-end [grid-area:1/1]" />
          </div>
          <div className="ml-[9px] grid h-[30px] w-[82px] items-center">
            <span className="h-[14px] w-[77px] border border-[#888] bg-[linear-gradient(to_right,transparent,#c4c4c4_95%),repeating-conic-gradient(#fff_0_25%,#c4c4c4_0_50%)] bg-[length:100%_100%,16px_16px] [grid-area:1/1]" />
            <input
              type="range"
              aria-label="Opacity"
              defaultValue="100"
              className="h-[30px] w-full appearance-none bg-transparent [grid-area:1/1] [&::-webkit-slider-thumb]:h-[30px] [&::-webkit-slider-thumb]:w-1.5 [&::-webkit-slider-thumb]:appearance-none [&::-webkit-slider-thumb]:border [&::-webkit-slider-thumb]:border-[#8a8a8a] [&::-webkit-slider-thumb]:bg-[#444]"
            />
          </div>
          <input aria-label="Opacity value" defaultValue="100" className="ml-1 w-8 bg-transparent pt-px text-right text-[18px] text-[#c4c4c4]" />
          <div className="ml-[3px]"><Spinner label="opacity" /></div>
        </div>
        <div className="flex h-9 items-center pb-px pl-[46px]">
          <ToolButton label="Clip to layer below" className="w-[30px]"><ClipMaskIcon /></ToolButton>
          <ToolButton label="Reference layer" className="w-[30px]"><LighthouseIcon /></ToolButton>
          <ToolButton label="Draft layer" className="w-[30px]"><DraftIcon /></ToolButton>
          <ToolButton label="Lock layer" className="w-[30px]"><LockIcon /></ToolButton>
          <ToolButton label="Lock transparent pixels" className="w-[30px]"><LockAlphaIcon /></ToolButton>
          <ToolButton label="Enable mask" dim className="h-[30px] w-12 bg-[#373737]"><MaskToggleIcon /><Chevron className="text-[#777]" /></ToolButton>
          <ToolButton label="Ruler range" dim className="ml-0.5 h-[30px] w-12 bg-[#373737]"><RulerToggleIcon /><Chevron className="text-[#777]" /></ToolButton>
        </div>
      </div>
      <div className="mx-2 flex flex-1 justify-between bg-[#242424]">
        <ul className="ml-px w-[276px]">
          <LayerRow name="Layer 1" active>
            <span className="ml-[7px] h-8 w-10 border-[3px] border-[#e4e4e4] bg-[#111] p-0.5">
              <span className="block h-full bg-[repeating-conic-gradient(#fff_0_25%,#ccc_0_50%)] bg-[length:12px_12px]" />
            </span>
            <span className="ml-[10px] pt-0.5 whitespace-pre">
              <span className="block">100 %Normal</span>
              <span className="block">Layer 1</span>
            </span>
          </LayerRow>
          <LayerRow name="Paper">
            <span className="ml-[10px] h-[26px] w-[34px] border-2 border-[#111] bg-white" />
            <svg width="27" height="27" viewBox="0 0 27 27" className="mb-3 ml-[19px] bg-white" aria-hidden="true">
              <path d="M5 19V6q0-2 2-2h12q2 0 2 2v16q0 2-2 2h-9z" fill="none" stroke="#444" strokeWidth="1.500" />
              <path d="M5 19h5v5z" fill="#444" />
            </svg>
            <span className="mt-6 ml-1">Paper</span>
          </LayerRow>
        </ul>
        <span className="mr-px mb-px w-[18px] bg-[#2b2b2b]" />
      </div>
      <div className="mx-2 flex h-[30px] items-center justify-between bg-[#333]">
        <ToolButton label="Two panes" className="w-[30px]"><TwoPaneIcon /></ToolButton>
        <div className="flex">
          <ToolButton label="New raster layer" className="w-[30px]"><NewLayerIcon /></ToolButton>
          <ToolButton label="New 3D layer" className="w-[30px]"><New3dIcon /></ToolButton>
          <ToolButton label="New folder" className="w-[30px]"><NewFolderIcon /></ToolButton>
          <ToolButton label="Transfer down" dim className="w-[30px]"><TransferIcon /></ToolButton>
          <ToolButton label="Merge down" className="w-[30px]"><MergeIcon /></ToolButton>
          <ToolButton label="Create mask" className="w-[30px]"><MaskIcon /></ToolButton>
          <ToolButton label="Apply mask" dim className="w-[30px]"><ApplyMaskIcon /></ToolButton>
          <ToolButton label="Delete layer" className="w-[30px]"><TrashIcon /></ToolButton>
        </div>
      </div>
    </Panel>
  );
}

function History() {
  return (
    <Panel title="History" className="h-[307px] pb-2">
      <div className="mx-2 flex flex-1 justify-between bg-[#242424]">
        <ul className="ml-px w-[276px]">
          <li className="h-8 rounded-xs border-b border-[#111] bg-[#434e63] pl-[5px] text-[18px] leading-[31px] text-[#c4c4c4]">Illustration</li>
        </ul>
        <span className="mr-px mb-px w-[18px] bg-[#2b2b2b]" />
      </div>
    </Panel>
  );
}

function App() {
  return (
    <div className="flex min-h-screen flex-col bg-[#191919] font-['Liberation_Sans',Arial,sans-serif]">
      <div className="font-['Open_Sans','Noto_Sans',sans-serif]">
        <DesktopStrip />
        <TitleBar />
        <nav className="flex h-[37px] items-center gap-8 border-b border-[#222] bg-[#333] pt-px pl-[21px] text-[17px] text-[#c4c4c4]">
          {MENUS.map((m) => <button key={m}>{m}</button>)}
        </nav>
        <CommandBar />
        <div className="h-px bg-[#222]" />
        <DocumentTabs />
      </div>

      <main className="flex flex-1 items-start border-b-2 border-black [&_h2]:font-['Open_Sans','Noto_Sans',sans-serif]">
        <aside className="w-[326px] shrink-0 pt-[87px] pl-4">
          <ColorWheel />
          <div className="mt-[22px] flex h-[369px]">
            <QuickAccess />
            <SubTool />
          </div>
          <ToolProperty />
        </aside>

        <div className="min-w-0 flex-1 pt-[105px] pr-[195px] pl-[158px]">
          <div className="aspect-[4/3] w-full bg-white" role="img" aria-label="Canvas" />
        </div>

        <aside className="mr-[15px] w-[312px] shrink-0 pt-[26px]">
          <Navigator />
          <LayerPanel />
          <History />
        </aside>
      </main>
    </div>
  );
}

export default App;
